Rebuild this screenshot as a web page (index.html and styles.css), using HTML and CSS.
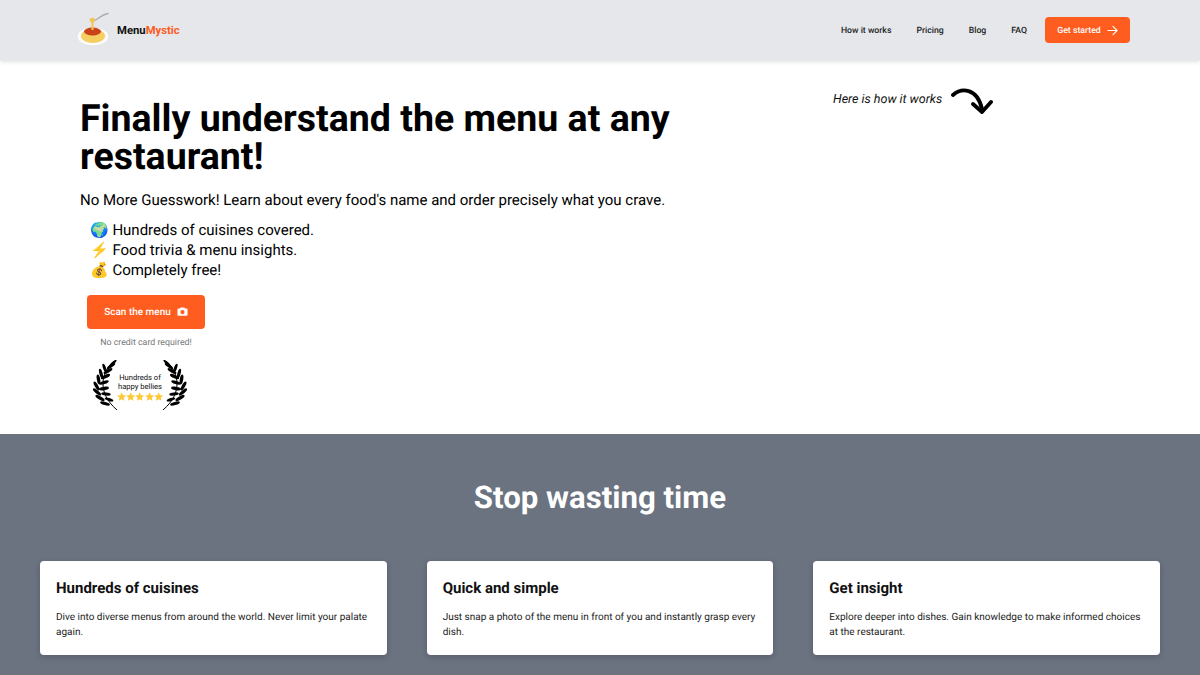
FILE: index.html
```html
<!DOCTYPE html>
<html lang="en">
<head>
<meta charset="utf-8">
<title>MenuMystic</title>
<link rel="stylesheet" href="styles.css">
</head>
<body>
<svg class="defs" aria-hidden="true">
  <defs>
    <symbol id="branch" viewBox="0 0 26 52">
      <path d="M20 2 C9 12 3 32 24 50" fill="none" stroke="#000" stroke-width="1"/>
      <g fill="#000">
        <ellipse cx="20" cy="3" rx="4.500" ry="1.300" transform="rotate(-40 20 3)"/>
        <ellipse cx="18" cy="6" rx="5" ry="1.500" transform="rotate(-35 18 6)"/>
        <ellipse cx="11.500" cy="8" rx="4.500" ry="1.500" transform="rotate(70 11.500 8)"/>
        <ellipse cx="15" cy="11" rx="5" ry="1.600" transform="rotate(-30 15 11)"/>
        <ellipse cx="8" cy="13.500" rx="5" ry="1.600" transform="rotate(75 8 13.500)"/>
        <ellipse cx="12.500" cy="16.500" rx="5" ry="1.700" transform="rotate(-25 12.500 16.500)"/>
        <ellipse cx="5.500" cy="19.500" rx="5" ry="1.700" transform="rotate(80 5.500 19.500)"/>
        <ellipse cx="11" cy="22.500" rx="5" ry="1.700" transform="rotate(-18 11 22.500)"/>
        <ellipse cx="3.500" cy="26" rx="5" ry="1.700" transform="rotate(60 3.500 26)"/>
        <ellipse cx="11" cy="28.500" rx="5" ry="1.700" transform="rotate(-8 11 28.500)"/>
        <ellipse cx="4" cy="32" rx="5.200" ry="1.700" transform="rotate(40 4 32)"/>
        <ellipse cx="13" cy="34" rx="4.800" ry="1.600" transform="rotate(5 13 34)"/>
        <ellipse cx="7" cy="38" rx="5.200" ry="1.700" transform="rotate(30 7 38)"/>
        <ellipse cx="16" cy="39.500" rx="4.500" ry="1.500" transform="rotate(18 16 39.500)"/>
        <ellipse cx="12" cy="43.500" rx="5" ry="1.600" transform="rotate(15 12 43.500)"/>
      </g>
    </symbol>
    <symbol id="star" viewBox="0 0 10 10">
      <path d="M5 .3 6.400 3.500 9.800 3.800 7.200 6.100 8 9.500 5 7.700 2 9.500 2.800 6.100 .2 3.800 3.600 3.500Z" fill="#fdc735"/>
    </symbol>
  </defs>
</svg>
<header class="topbar">
  <a class="brand" href="#">
    <svg class="brand-logo" viewBox="0 0 36 36" aria-hidden="true">
      <path d="M18 8.500 C22 8 24 3 32 1.500" fill="none" stroke="#a9adb1" stroke-width="1.500" stroke-linecap="round"/>
      <ellipse cx="17" cy="24.500" rx="16" ry="9.500" fill="#fbfbfb" stroke="#d9dadb" stroke-width=".6"/>
      <ellipse cx="17" cy="24" rx="12" ry="7" fill="#f6cf63"/>
      <ellipse cx="16.500" cy="19.500" rx="8.500" ry="4" fill="#c9431b"/>
      <path d="M13.500 8 C13.500 5 19 5 19 8 L17.500 11 L17.500 18 L15.500 18 L15.500 11 Z" fill="#f3c653"/>
    </svg>
    <span class="brand-name">Menu<span class="brand-accent">Mystic</span></span>
  </a>
  <nav class="nav">
    <a href="#">How it works</a>
    <a href="#">Pricing</a>
    <a href="#">Blog</a>
    <a href="#">FAQ</a>
    <a class="btn btn-nav" href="#">Get started
      <svg class="arrow" viewBox="0 0 12 12" aria-hidden="true"><path d="M1 6h10M6.500 1.500 11 6l-4.500 4.500" fill="none" stroke="#fff" stroke-width="1.200" stroke-linecap="round" stroke-linejoin="round"/></svg>
    </a>
  </nav>
</header>
<main>
  <section class="hero">
    <div class="hero-main">
      <h1>Finally understand the menu at any restaurant!</h1>
      <p class="lead">No More Guesswork! Learn about every food's name and order precisely what you crave.</p>
      <ul class="perks">
        <li>🌍 Hundreds of cuisines covered.</li>
        <li>⚡ Food trivia &amp; menu insights.</li>
        <li>💰 Completely free!</li>
      </ul>
      <div class="cta">
        <a class="btn btn-cta" href="#">Scan the menu
          <svg class="camera" viewBox="0 0 12 12" aria-hidden="true"><path fill-rule="evenodd" d="M4 1.500h4l.8 1.300H10.500a1 1 0 0 1 1 1V9.500a1 1 0 0 1-1 1h-9a1 1 0 0 1-1-1V3.800a1 1 0 0 1 1-1h1.700ZM6 4.300a2.300 2.300 0 1 0 0 4.600 2.300 2.300 0 0 0 0-4.600Z" fill="#fff"/></svg>
        </a>
        <p class="note">No credit card required!</p>
        <div class="laurel">
          <svg class="wreath"><use href="#branch"/></svg>
          <div class="laurel-text">
            <span>Hundreds of</span>
            <span>happy bellies</span>
            <span class="stars">
              <svg class="star"><use href="#star"/></svg>
              <svg class="star"><use href="#star"/></svg>
              <svg class="star"><use href="#star"/></svg>
              <svg class="star"><use href="#star"/></svg>
              <svg class="star"><use href="#star"/></svg>
            </span>
          </div>
          <svg class="wreath wreath-flip"><use href="#branch"/></svg>
        </div>
      </div>
    </div>
    <div class="hero-side">
      <em>Here is how it works</em>
      <svg class="curl" viewBox="0 0 42 26" aria-hidden="true">
        <path d="M2 7 C10 0 26 -1 31 21" fill="none" stroke="#000" stroke-width="3.800" stroke-linecap="round"/>
        <path d="M22 16 L31 24 L40 14" fill="none" stroke="#000" stroke-width="3.800" stroke-linecap="round" stroke-linejoin="round"/>
      </svg>
    </div>
  </section>
  <section class="why">
    <h2>Stop wasting time</h2>
    <div class="cards">
      <article class="card">
        <h3>Hundreds of cuisines</h3>
        <p>Dive into diverse menus from around the world. Never limit your palate again.</p>
      </article>
      <article class="card">
        <h3>Quick and simple</h3>
        <p>Just snap a photo of the menu in front of you and instantly grasp every dish.</p>
      </article>
      <article class="card">
        <h3>Get insight</h3>
        <p>Explore deeper into dishes. Gain knowledge to make informed choices at the restaurant.</p>
      </article>
    </div>
  </section>
</main>
</body>
</html>
```
FILE: styles.css
```css
* { box-sizing: border-box; }
html, body { margin: 0; padding: 0; }
body {
  font-family: Roboto, "Noto Sans", sans-serif;
  color: #000;
  background: #fff;
  overflow: hidden;
  height: 675px;
  text-rendering: geometricPrecision;
}
a { text-decoration: none; color: inherit; }
.defs { display: none; }

.topbar {
  height: 60px;
  background: #e5e7eb;
  box-shadow: 0 2px 4px rgba(0,0,0,.12);
  padding: 0 70px 0 76px;
  display: flex;
  align-items: center;
  justify-content: space-between;
  position: relative;
}
.brand { display: flex; align-items: center; gap: 5px; }
.brand-logo { width: 36px; height: 36px; margin-top: -1px; }
.brand-name { font-size: 11.300px; font-weight: 700; color: #111; }
.brand-accent { color: #ff5c1f; }
.nav { display: flex; align-items: center; gap: 25px; font-size: 8.700px; font-weight: 500; color: #222; }
.nav a { padding-top: 2px; }
.btn { background: #ff5c1f; color: #fff; border-radius: 4px; display: flex; align-items: center; font-weight: 500; }
.nav .btn-nav { height: 26px; width: 85px; justify-content: center; gap: 6px; margin-left: -7px; color: #fff; }
.arrow { width: 11px; height: 11px; margin-top: -2px; }

.hero { height: 374px; padding: 39.500px 0 0 80px; display: flex; }
.hero-main { width: 753px; }
h1 { margin: 0; width: 640px; font-size: 37.500px; line-height: 38.500px; font-weight: 700; }
.lead { margin: 12px 0 0; font-size: 15px; line-height: 22px; }
.perks { list-style: none; margin: 9px 0 0 10px; padding: 0; font-size: 15px; line-height: 20px; }
.cta { margin: 15px 0 0 7px; width: 118px; }
.btn-cta { height: 34px; width: 118px; justify-content: center; gap: 6px; font-size: 10px; padding-top: 2px; }
.camera { width: 11px; height: 11px; margin-top: -2px; }
.note { margin: 9px -20px 0; text-align: center; font-size: 8.800px; line-height: 11px; color: #777; }
.laurel { display: flex; justify-content: center; align-items: center; width: 94px; margin: 11px 0 0 6px; }
.wreath { width: 26px; height: 52px; flex: none; }
.wreath-flip { transform: scaleX(-1); }
.laurel-text { display: flex; flex-direction: column; align-items: center; font-size: 7.600px; line-height: 9px; width: 42px; margin-top: 3px; white-space: nowrap; color: #111; }
.stars { display: flex; margin-top: 1px; }
.star { width: 9.300px; height: 9.300px; }

.hero-side { display: flex; align-items: flex-start; gap: 9px; font-size: 12.500px; line-height: 20px; color: #111; margin-top: -9.500px; }
.curl { width: 42px; height: 26px; margin-top: -2px; }

.why { height: 241px; background: #6b7280; padding: 46px 40px 0; }
h2 { margin: 0; text-align: center; color: #fff; font-size: 31.200px; line-height: 36px; font-weight: 700; }
.cards { margin-top: 45px; display: grid; grid-template-columns: repeat(3, 1fr); gap: 40px; }
.card { background: #fff; border-radius: 4px; height: 94px; padding: 16px; box-shadow: 0 2px 6px rgba(0,0,0,.18); }
h3 { margin: 0; font-size: 15px; line-height: 22px; font-weight: 700; color: #111; }
.card p { margin: 11px 0 0; font-size: 10px; line-height: 15px; color: #222; }
```
